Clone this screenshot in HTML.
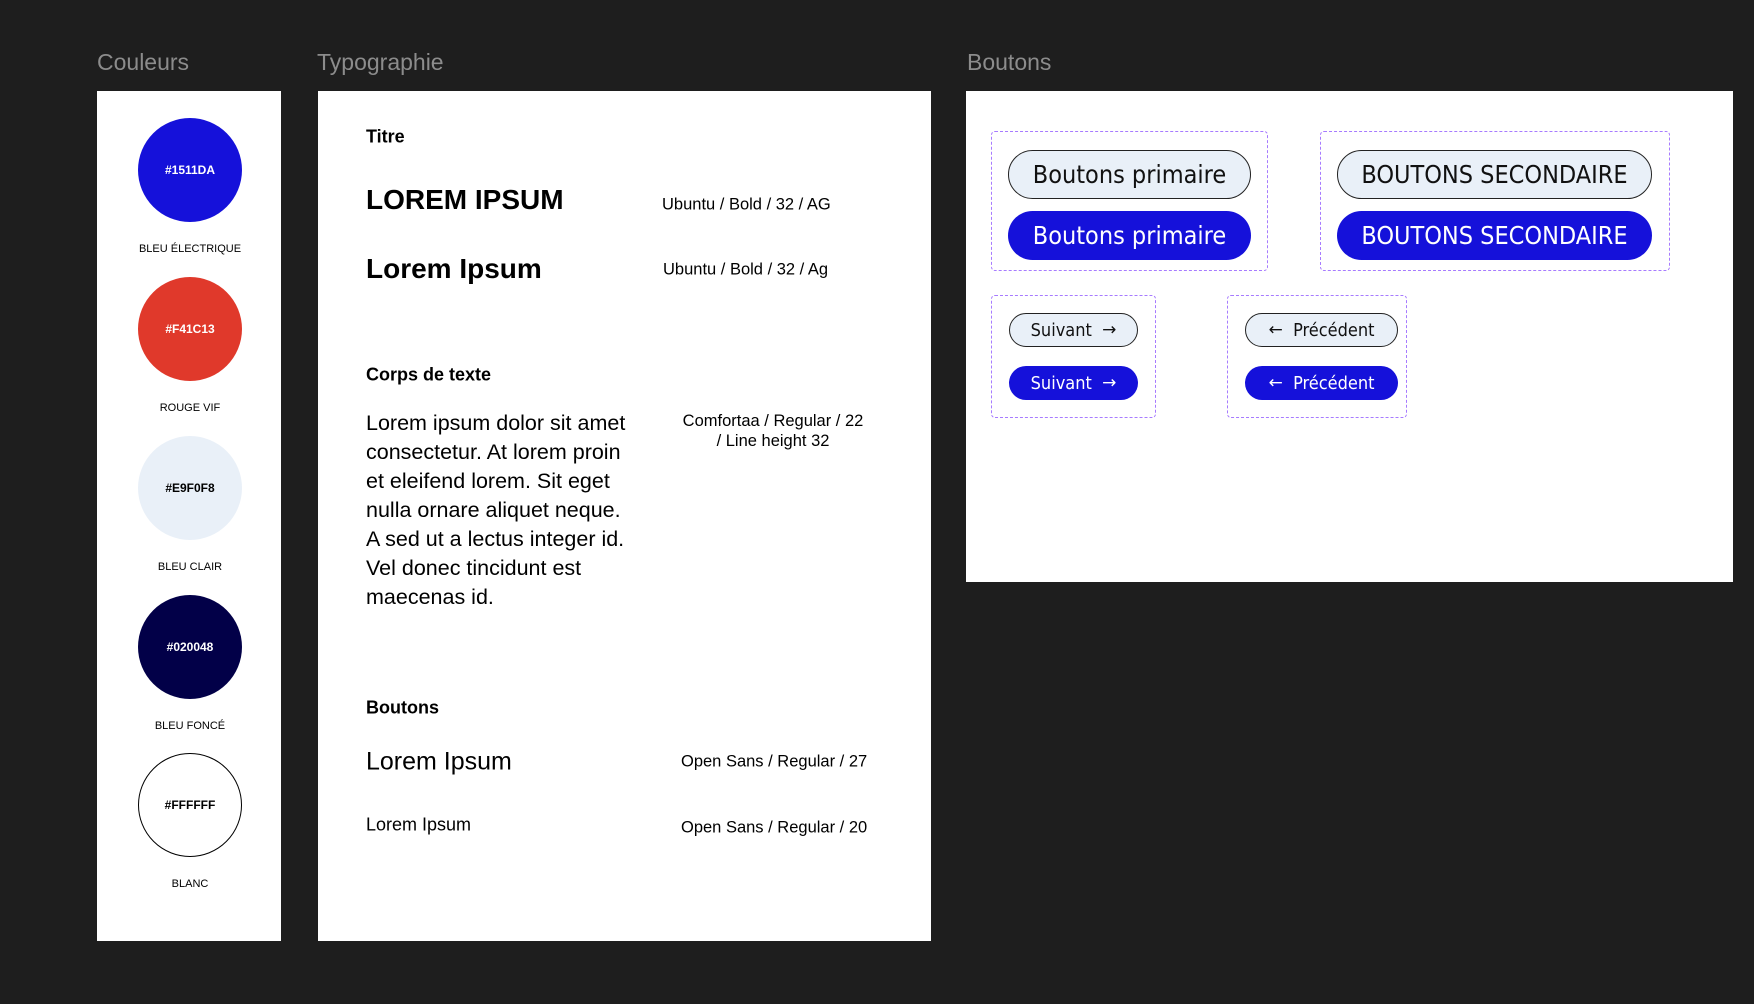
<!DOCTYPE html>
<html><head><meta charset="utf-8"><style>
*{margin:0;padding:0;box-sizing:border-box}
body{width:1754px;height:1004px;background:#1e1e1e;position:relative;overflow:hidden;font-family:"Liberation Sans",sans-serif;color:#000}
.a{position:absolute;white-space:nowrap}
.h{color:#8c8c8c;font-size:23px;top:49px}
.panel{position:absolute;background:#fff}
.c{position:absolute;width:104px;height:104px;border-radius:50%;left:138px;display:flex;align-items:center;justify-content:center;font-size:12px;font-weight:bold;color:#fff}
.lbl{position:absolute;left:98px;width:184px;text-align:center;font-size:11px;line-height:12px}
.t{transform:translateY(-50%)}
.dash{position:absolute;border:1.5px dashed #a77bff;border-radius:4px}
.btn{position:absolute;border-radius:30px;display:flex;align-items:center;justify-content:center;font-family:"DejaVu Sans Condensed","Liberation Sans",sans-serif}
.o{background:#e9f0f8;border:1.3px solid #222;color:#111}
.f{background:#1511da;color:#fff}
.big{height:49px;font-size:25px}
.sm{height:34px;font-size:18px}
.ar{font-size:17px;font-family:"DejaVu Sans",sans-serif}
</style></head><body>
<div class="a h" style="left:97px">Couleurs</div>
<div class="a h" style="left:317px">Typographie</div>
<div class="a h" style="left:967px">Boutons</div>

<div class="panel" style="left:97px;top:91px;width:184px;height:850px"></div>
<div class="c" style="top:118px;background:#1511da">#1511DA</div>
<div class="lbl" style="top:243px">BLEU ÉLECTRIQUE</div>
<div class="c" style="top:277px;background:#e0392b">#F41C13</div>
<div class="lbl" style="top:402px">ROUGE VIF</div>
<div class="c" style="top:436px;background:#e9f0f8;color:#000">#E9F0F8</div>
<div class="lbl" style="top:561px">BLEU CLAIR</div>
<div class="c" style="top:595px;background:#020048">#020048</div>
<div class="lbl" style="top:720px">BLEU FONCÉ</div>
<div class="c" style="top:753px;background:#fff;border:1px solid #000;color:#000">#FFFFFF</div>
<div class="lbl" style="top:878px">BLANC</div>

<div class="panel" style="left:318px;top:91px;width:613px;height:850px"></div>
<div class="a t" style="left:366px;top:137px;font-size:18px;font-weight:bold">Titre</div>
<div class="a t" style="left:366px;top:200px;font-size:28px;font-weight:bold">LOREM IPSUM</div>
<div class="a t" style="left:662px;top:205px;font-size:16.5px">Ubuntu / Bold / 32 / AG</div>
<div class="a t" style="left:366px;top:269px;font-size:28px;font-weight:bold">Lorem Ipsum</div>
<div class="a t" style="left:663px;top:270px;font-size:16.5px">Ubuntu / Bold / 32 / Ag</div>
<div class="a t" style="left:366px;top:375px;font-size:18px;font-weight:bold">Corps de texte</div>
<div class="a" style="left:366px;top:409px;font-size:21.5px;line-height:29px;white-space:normal">Lorem ipsum dolor sit amet<br>consectetur. At lorem proin<br>et eleifend lorem. Sit eget<br>nulla ornare aliquet neque.<br>A sed ut a lectus integer id.<br>Vel donec tincidunt est<br>maecenas id.</div>
<div class="a" style="left:663px;top:411px;width:220px;text-align:center;font-size:16.5px;line-height:20px">Comfortaa / Regular / 22<br>/ Line height 32</div>
<div class="a t" style="left:366px;top:708px;font-size:18px;font-weight:bold">Boutons</div>
<div class="a t" style="left:366px;top:762px;font-size:25px">Lorem Ipsum</div>
<div class="a t" style="left:681px;top:762px;font-size:16.5px">Open Sans / Regular / 27</div>
<div class="a t" style="left:366px;top:825px;font-size:18px">Lorem Ipsum</div>
<div class="a t" style="left:681px;top:828px;font-size:16.5px">Open Sans / Regular / 20</div>

<div class="panel" style="left:966px;top:91px;width:767px;height:491px"></div>
<div class="dash" style="left:991px;top:131px;width:277px;height:140px"></div>
<div class="btn o big" style="left:1008px;top:150px;width:243px">Boutons primaire</div>
<div class="btn f big" style="left:1008px;top:211px;width:243px">Boutons primaire</div>
<div class="dash" style="left:1320px;top:131px;width:350px;height:140px"></div>
<div class="btn o big" style="left:1337px;top:150px;width:315px">BOUTONS SECONDAIRE</div>
<div class="btn f big" style="left:1337px;top:211px;width:315px">BOUTONS SECONDAIRE</div>
<div class="dash" style="left:991px;top:295px;width:165px;height:123px"></div>
<div class="btn o sm" style="left:1009px;top:313px;width:129px">Suivant&nbsp;&nbsp;<span class="ar">→</span></div>
<div class="btn f sm" style="left:1009px;top:366px;width:129px">Suivant&nbsp;&nbsp;<span class="ar">→</span></div>
<div class="dash" style="left:1227px;top:295px;width:180px;height:123px"></div>
<div class="btn o sm" style="left:1245px;top:313px;width:153px"><span class="ar">←</span>&nbsp;&nbsp;Précédent</div>
<div class="btn f sm" style="left:1245px;top:366px;width:153px"><span class="ar">←</span>&nbsp;&nbsp;Précédent</div>
</body></html>
